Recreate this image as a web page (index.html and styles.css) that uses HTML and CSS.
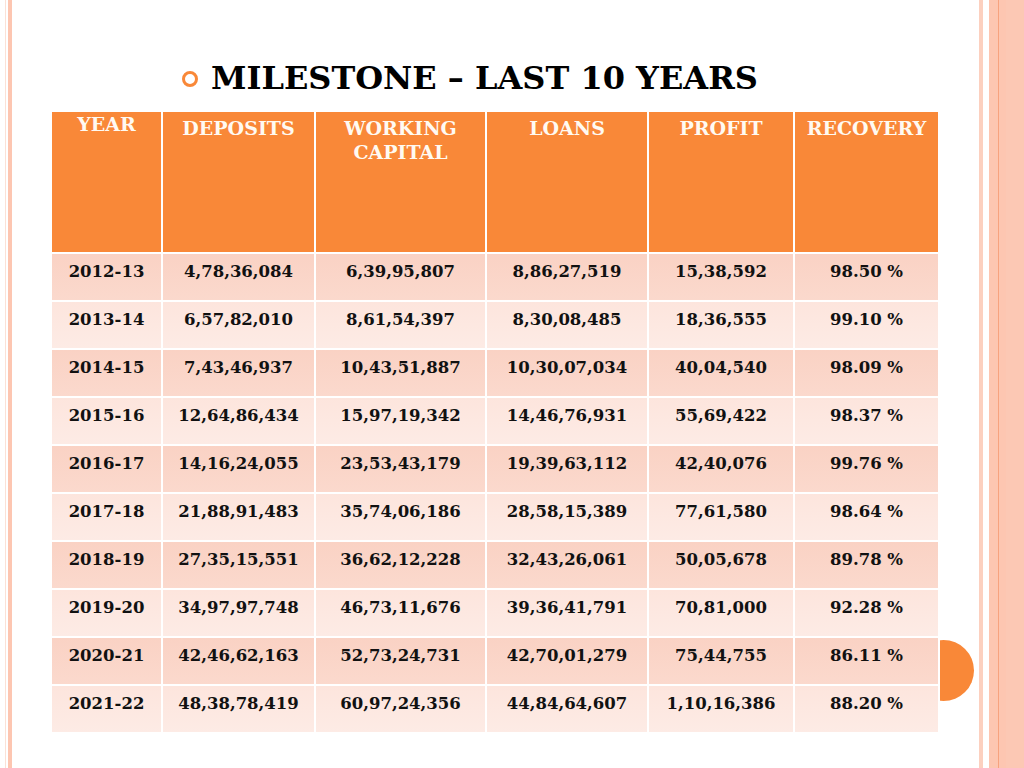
FILE: index.html
```html
<!DOCTYPE html>
<html>
<head>
<meta charset="utf-8">
<link rel="stylesheet" href="styles.css">
</head>
<body>
<div class="slide">
  <div class="edge-left"></div>
  <div class="edge-right"></div>
  <header class="title-row">
    <span class="ring"></span>
    <h1 class="title">MILESTONE – LAST 10 YEARS</h1>
  </header>
  <div class="table-wrap">
    <span class="dot"></span>
    <table class="grid">
      <colgroup>
        <col style="width:109px"><col style="width:151px"><col style="width:169px"><col style="width:160px"><col style="width:144px"><col style="width:143px">
      </colgroup>
      <thead>
        <tr class="head">
          <th class="year-h">YEAR</th>
          <th>DEPOSITS</th>
          <th>WORKING<br>CAPITAL</th>
          <th>LOANS</th>
          <th>PROFIT</th>
          <th>RECOVERY</th>
        </tr>
      </thead>
      <tbody>
        <tr class="odd"><td>2012-13</td><td>4,78,36,084</td><td>6,39,95,807</td><td>8,86,27,519</td><td>15,38,592</td><td>98.50 %</td></tr>
        <tr class="even"><td>2013-14</td><td>6,57,82,010</td><td>8,61,54,397</td><td>8,30,08,485</td><td>18,36,555</td><td>99.10 %</td></tr>
        <tr class="odd"><td>2014-15</td><td>7,43,46,937</td><td>10,43,51,887</td><td>10,30,07,034</td><td>40,04,540</td><td>98.09 %</td></tr>
        <tr class="even"><td>2015-16</td><td>12,64,86,434</td><td>15,97,19,342</td><td>14,46,76,931</td><td>55,69,422</td><td>98.37 %</td></tr>
        <tr class="odd"><td>2016-17</td><td>14,16,24,055</td><td>23,53,43,179</td><td>19,39,63,112</td><td>42,40,076</td><td>99.76 %</td></tr>
        <tr class="even"><td>2017-18</td><td>21,88,91,483</td><td>35,74,06,186</td><td>28,58,15,389</td><td>77,61,580</td><td>98.64 %</td></tr>
        <tr class="odd"><td>2018-19</td><td>27,35,15,551</td><td>36,62,12,228</td><td>32,43,26,061</td><td>50,05,678</td><td>89.78 %</td></tr>
        <tr class="even"><td>2019-20</td><td>34,97,97,748</td><td>46,73,11,676</td><td>39,36,41,791</td><td>70,81,000</td><td>92.28 %</td></tr>
        <tr class="odd"><td>2020-21</td><td>42,46,62,163</td><td>52,73,24,731</td><td>42,70,01,279</td><td>75,44,755</td><td>86.11 %</td></tr>
        <tr class="even"><td>2021-22</td><td>48,38,78,419</td><td>60,97,24,356</td><td>44,84,64,607</td><td>1,10,16,386</td><td>88.20 %</td></tr>
      </tbody>
    </table>
  </div>
</div>
</body>
</html>
```

FILE: styles.css
```css
html, body {
  margin: 0;
  padding: 0;
  background: #ffffff;
}

.slide {
  position: relative;
  width: 1024px;
  height: 768px;
  overflow: hidden;
  background: #ffffff;
  font-family: "DejaVu Serif", "Liberation Serif", serif;
}

.edge-left {
  position: absolute;
  left: 5px;
  top: 0;
  width: 7px;
  height: 768px;
  background: linear-gradient(to right, #fbe1d6 0, #fbe1d6 1px, #ffffff 1px, #ffffff 3px, #fdc6b1 3px, #fdc6b1 7px);
}

.edge-right {
  position: absolute;
  left: 979px;
  top: 0;
  width: 45px;
  height: 768px;
  background: linear-gradient(to right,
    #fcd0bf 0, #fcd0bf 4px,
    #ffffff 4px, #ffffff 10px,
    #fdc6b1 10px, #fdc6b1 19px,
    #f7a27e 19px, #f7a27e 20px,
    #fdc6b1 20px, #fdc6b1 27px,
    #fcc8b4 27px, #fcc8b4 45px);
}

.title-row {
  display: flex;
  align-items: center;
  height: 40px;
  padding: 58px 0 0 182px;
  gap: 13px;
}

.ring {
  width: 10px;
  height: 10px;
  border: 3px solid #f98838;
  border-radius: 50%;
  margin-top: 2px;
}

.title {
  margin: 0;
  font-size: 32px;
  line-height: 40px;
  font-weight: bold;
  color: #000000;
}

.table-wrap {
  position: relative;
  margin: 12px 0 0 50px;
  width: 890px;
}

.dot {
  position: absolute;
  left: 863px;
  top: 530px;
  width: 61px;
  height: 61px;
  border-radius: 50%;
  background: #f98838;
}

.grid {
  position: relative;
  table-layout: fixed;
  border-collapse: separate;
  border-spacing: 2px;
  background: #ffffff;
  width: 890px;
}

.grid th,
.grid td {
  padding: 0;
  text-align: center;
  vertical-align: top;
  font-weight: bold;
}

.grid .head {
  height: 140px;
}

.grid .head th {
  background: #f98838;
  color: #fffaf2;
  font-size: 19px;
  line-height: 24px;
  padding-top: 4px;
  font-weight: bold;
}

.grid .head th.year-h {
  padding-top: 0;
}

.grid tbody tr {
  height: 46px;
}

.grid tbody td {
  font-size: 16.5px;
  line-height: 20px;
  padding-top: 8px;
  color: #111111;
}

.grid tr.odd td {
  background: linear-gradient(to bottom, #fad2c4, #fbd9cd);
}

.grid tr.even td {
  background: linear-gradient(to bottom, #fde5dd, #fdebe5);
}
```
